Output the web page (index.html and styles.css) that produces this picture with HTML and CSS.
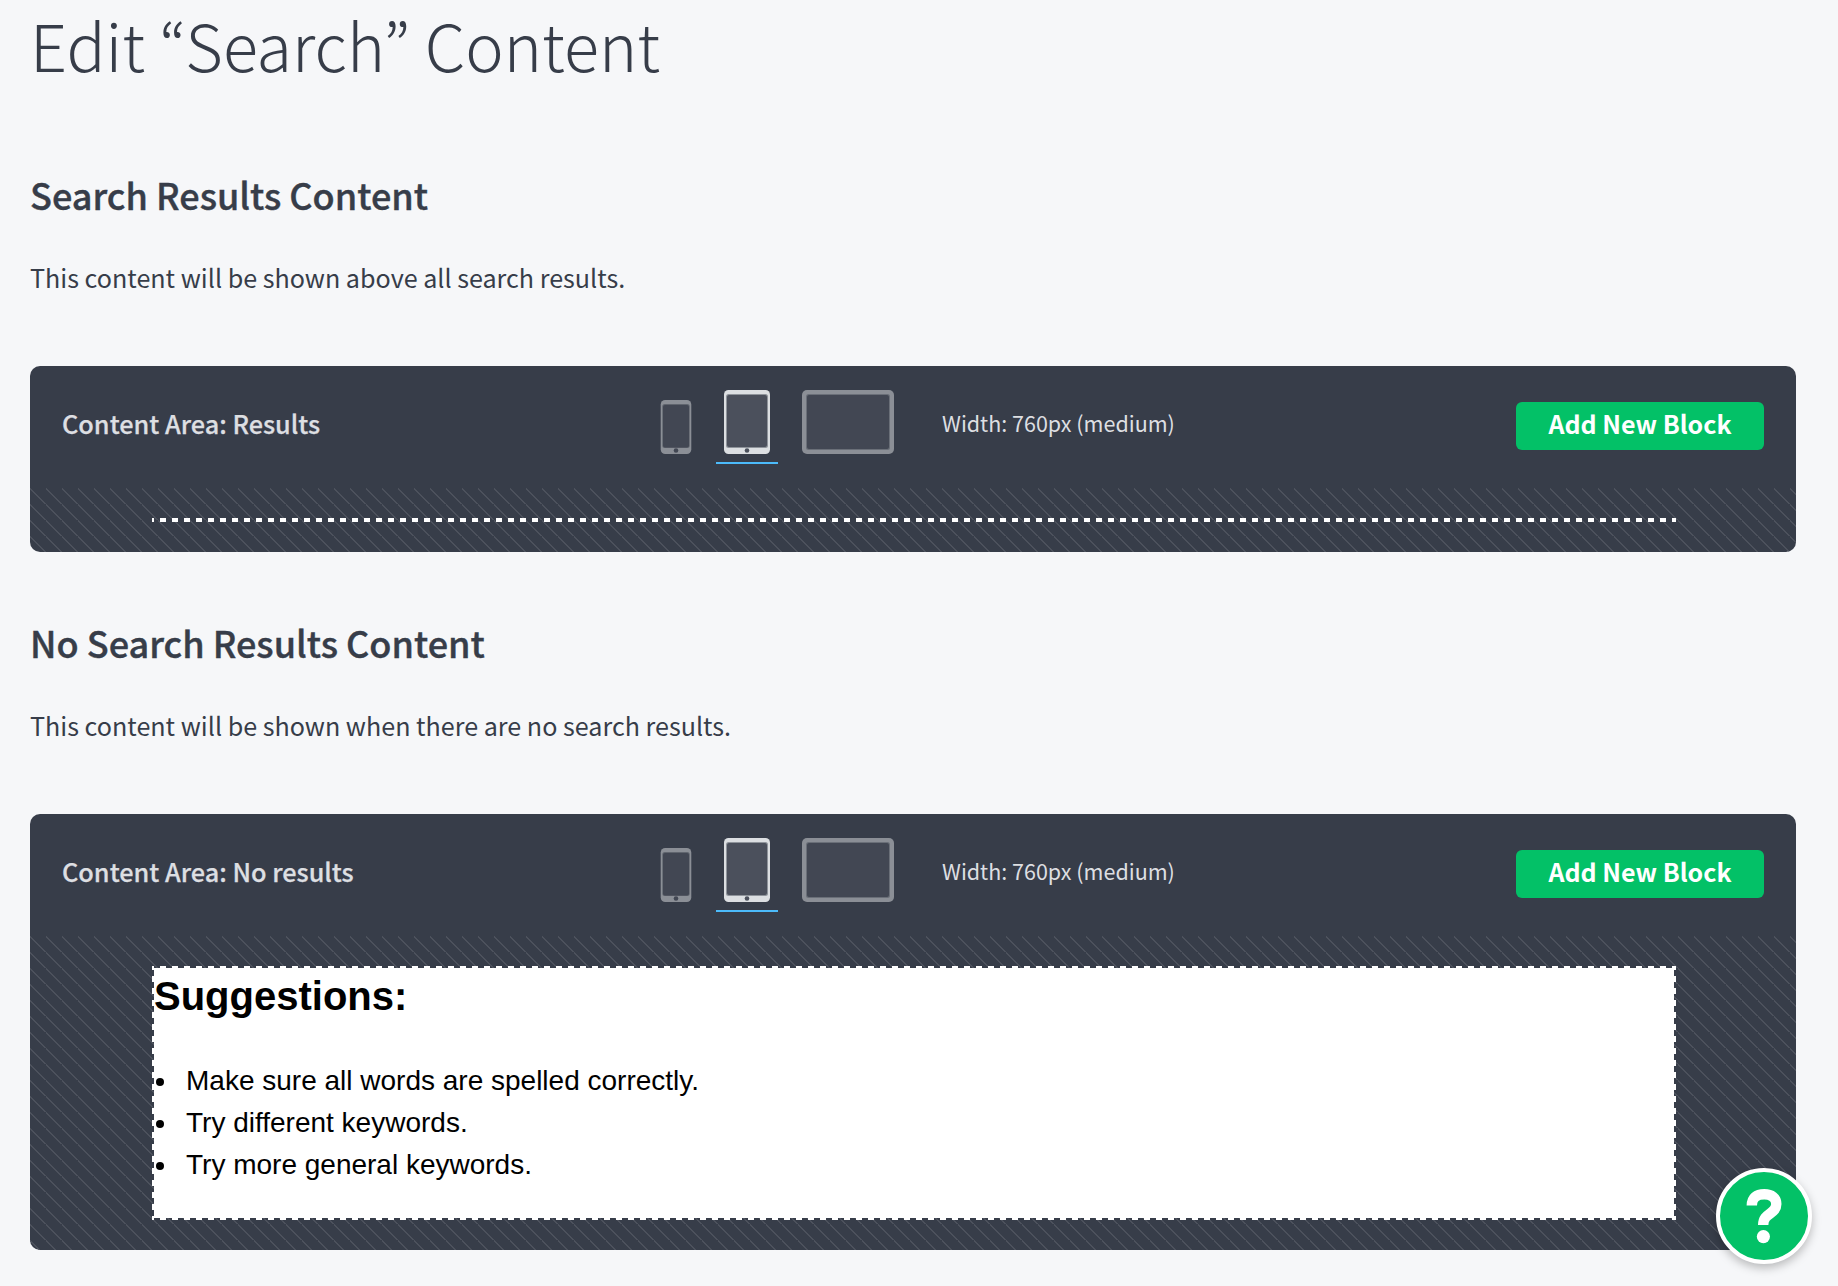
FILE: index.html
```html
<!DOCTYPE html>
<html lang="en">
<head>
<meta charset="utf-8">
<title>Edit “Search” Content</title>
<link rel="stylesheet" href="styles.css">
</head>
<body>
<main class="page">
  <h1 class="page-title">Edit “Search” Content</h1>

  <section class="section">
    <h2 class="section-title">Search Results Content</h2>
    <p class="section-text">This content will be shown above all search results.</p>
    <div class="panel">
      <header class="panel-header">
        <h3 class="panel-title">Content Area: Results</h3>
        <div class="devices">
          <button class="device" aria-label="Small"><svg width="32" height="54" viewBox="0 0 32 54"><rect x=".7" width="30.600" height="54" rx="4.500" fill="#8b8f96"/><rect x="2.300" y="4" width="27.400" height="44" rx="2.500" fill="#60656e"/><rect x="3" y="5" width="26" height="42.500" rx="2" fill="#424753"/><circle cx="16" cy="50.500" r="2.300" fill="#424753"/></svg></button>
          <button class="device device-active" aria-label="Medium"><svg width="46" height="64" viewBox="0 0 46 64"><rect width="46" height="64" rx="4.500" fill="#dcdfe2"/><rect x="2" y="4" width="42" height="54" rx="2.500" fill="#8f949b"/><rect x="3" y="5" width="40" height="52" rx="2" fill="#4b505c"/><circle cx="23" cy="60.500" r="2.300" fill="#4b505c"/></svg></button>
          <button class="device" aria-label="Large"><svg width="92" height="64" viewBox="0 0 92 64"><rect width="92" height="64" rx="5" fill="#8b8f96"/><rect x="4" y="4" width="84" height="56" rx="2.500" fill="#6a6f78"/><rect x="5" y="5" width="82" height="54" rx="2" fill="#424753"/></svg></button>
          <span class="width-label">Width: 760px (medium)</span>
        </div>
        <button class="add-button">Add New Block</button>
      </header>
      <div class="canvas"><div class="frame"></div></div>
    </div>
  </section>

  <section class="section">
    <h2 class="section-title">No Search Results Content</h2>
    <p class="section-text">This content will be shown when there are no search results.</p>
    <div class="panel">
      <header class="panel-header">
        <h3 class="panel-title">Content Area: No results</h3>
        <div class="devices">
          <button class="device" aria-label="Small"><svg width="32" height="54" viewBox="0 0 32 54"><rect x=".7" width="30.600" height="54" rx="4.500" fill="#8b8f96"/><rect x="2.300" y="4" width="27.400" height="44" rx="2.500" fill="#60656e"/><rect x="3" y="5" width="26" height="42.500" rx="2" fill="#424753"/><circle cx="16" cy="50.500" r="2.300" fill="#424753"/></svg></button>
          <button class="device device-active" aria-label="Medium"><svg width="46" height="64" viewBox="0 0 46 64"><rect width="46" height="64" rx="4.500" fill="#dcdfe2"/><rect x="2" y="4" width="42" height="54" rx="2.500" fill="#8f949b"/><rect x="3" y="5" width="40" height="52" rx="2" fill="#4b505c"/><circle cx="23" cy="60.500" r="2.300" fill="#4b505c"/></svg></button>
          <button class="device" aria-label="Large"><svg width="92" height="64" viewBox="0 0 92 64"><rect width="92" height="64" rx="5" fill="#8b8f96"/><rect x="4" y="4" width="84" height="56" rx="2.500" fill="#6a6f78"/><rect x="5" y="5" width="82" height="54" rx="2" fill="#424753"/></svg></button>
          <span class="width-label">Width: 760px (medium)</span>
        </div>
        <button class="add-button">Add New Block</button>
      </header>
      <div class="canvas">
        <div class="frame">
          <div class="content">
            <h2 class="content-title">Suggestions:</h2>
            <ul class="content-list">
              <li>Make sure all words are spelled correctly.</li>
              <li>Try different keywords.</li>
              <li>Try more general keywords.</li>
            </ul>
          </div>
        </div>
      </div>
    </div>
  </section>
</main>
<button class="help" aria-label="Help"><svg width="88" height="88" viewBox="0 0 88 88" fill="none"><path d="M31.800 33.600C31.800 25.500 36.500 22.300 44.300 22.300C51.500 22.300 56.300 25.800 56.300 32C56.300 42.500 43.200 40.500 43.200 53" stroke="#fff" stroke-width="10.400"/><circle cx="43.400" cy="64.600" r="6.600" fill="#fff"/></svg></button>
</body>
</html>
```
FILE: styles.css
```css
* { box-sizing: border-box; }

body {
  margin: 0;
  height: 1286px;
  overflow: hidden;
  background: #f6f7f9;
  color: #373d49;
  font-family: "Noto Sans CJK KR", "Noto Sans", sans-serif;
}

h1, h2, h3, p, ul { margin: 0; }

button {
  border: 0;
  padding: 0;
  font: inherit;
  background: none;
}

.page { padding: 0 42px 0 30px; }

.page-title {
  height: 92px;
  font-size: 64.75px;
  line-height: 88px;
  font-weight: 200;
  white-space: nowrap;
}

.section { padding-top: 77px; }
.section + .section { padding-top: 65px; }

.section-title {
  height: 50px;
  font-size: 36.050px;
  line-height: 50px;
  font-weight: 500;
  -webkit-text-stroke: .4px;
}

.section-text {
  height: 40px;
  margin: 38px 0 69px;
  font-size: 25.120px;
  line-height: 40px;
}

.panel {
  border-radius: 10px;
  overflow: hidden;
  background: #373d49;
}

.panel-header {
  display: grid;
  grid-template-columns: 598px auto 1fr;
  align-items: start;
  height: 122px;
  padding: 0 32px;
}

.panel-title {
  margin-top: 37px;
  color: #dddfe2;
  font-size: 25.280px;
  line-height: 40px;
  font-weight: 500;
  -webkit-text-stroke: .25px;
}

.devices {
  display: flex;
  align-items: flex-end;
  height: 98px;
}

.device {
  display: flex;
  padding-bottom: 10px;
}

.device-active {
  margin: 0 24px;
  padding: 0 8px 8px;
  border-bottom: 2px solid #4cbbfa;
}

.width-label {
  align-self: flex-start;
  margin: 39px 0 0 48px;
  color: #dddfe2;
  font-size: 21.500px;
  line-height: 36px;
}

.add-button {
  justify-self: end;
  width: 248px;
  height: 48px;
  padding-bottom: 6px;
  margin-top: 36px;
  border-radius: 6px;
  background: #03c167;
  color: #fff;
  font-size: 25px;
  line-height: 40px;
  font-weight: 700;
}

.canvas {
  padding: 30px 120px 30px 122px;
  background: linear-gradient(45deg, transparent 45.500%, #4c515c 45.500% 51.500%, transparent 51.500%) 0 0 / 16px 16px;
}

/* Dashed frame: one striped strip per edge, 6px dashes on a 12px pitch */
.frame {
  --dash-x: repeating-linear-gradient(90deg, #fff 0 2px, transparent 2px 8px, #fff 8px 12px);
  --dash-y: repeating-linear-gradient(180deg, #fff 0 4px, transparent 4px 10px, #fff 10px 12px);
  padding: 2px;
  background:
    var(--dash-x) top / 100% 2px no-repeat,
    var(--dash-x) bottom / 100% 2px no-repeat,
    var(--dash-y) left / 2px 100% no-repeat,
    var(--dash-y) right / 2px 100% no-repeat;
}

.content {
  height: 250px;
  background: #fff;
  color: #000;
  font-family: "Liberation Sans", Arial, sans-serif;
}

.content-title {
  padding-top: 3px;
  font-size: 40px;
  line-height: 50px;
}

.content-list {
  padding: 39px 0 0;
  font-size: 28px;
  line-height: 42px;
  list-style: none;
}

.content-list li {
  display: flex;
  align-items: center;
  gap: 22px;
  padding-left: 2px;
}

.content-list li::before {
  content: "";
  width: 8px;
  height: 8px;
  margin-top: 1px;
  border-radius: 50%;
  background: #000;
}

.help {
  position: absolute;
  left: 1716px;
  top: 1168px;
  width: 96px;
  height: 96px;
  border: 4px solid #fff;
  border-radius: 50%;
  background: #03c167;
  box-shadow: 0 4px 10px rgba(0, 0, 0, .25);
}

.help svg { display: block; }
```
